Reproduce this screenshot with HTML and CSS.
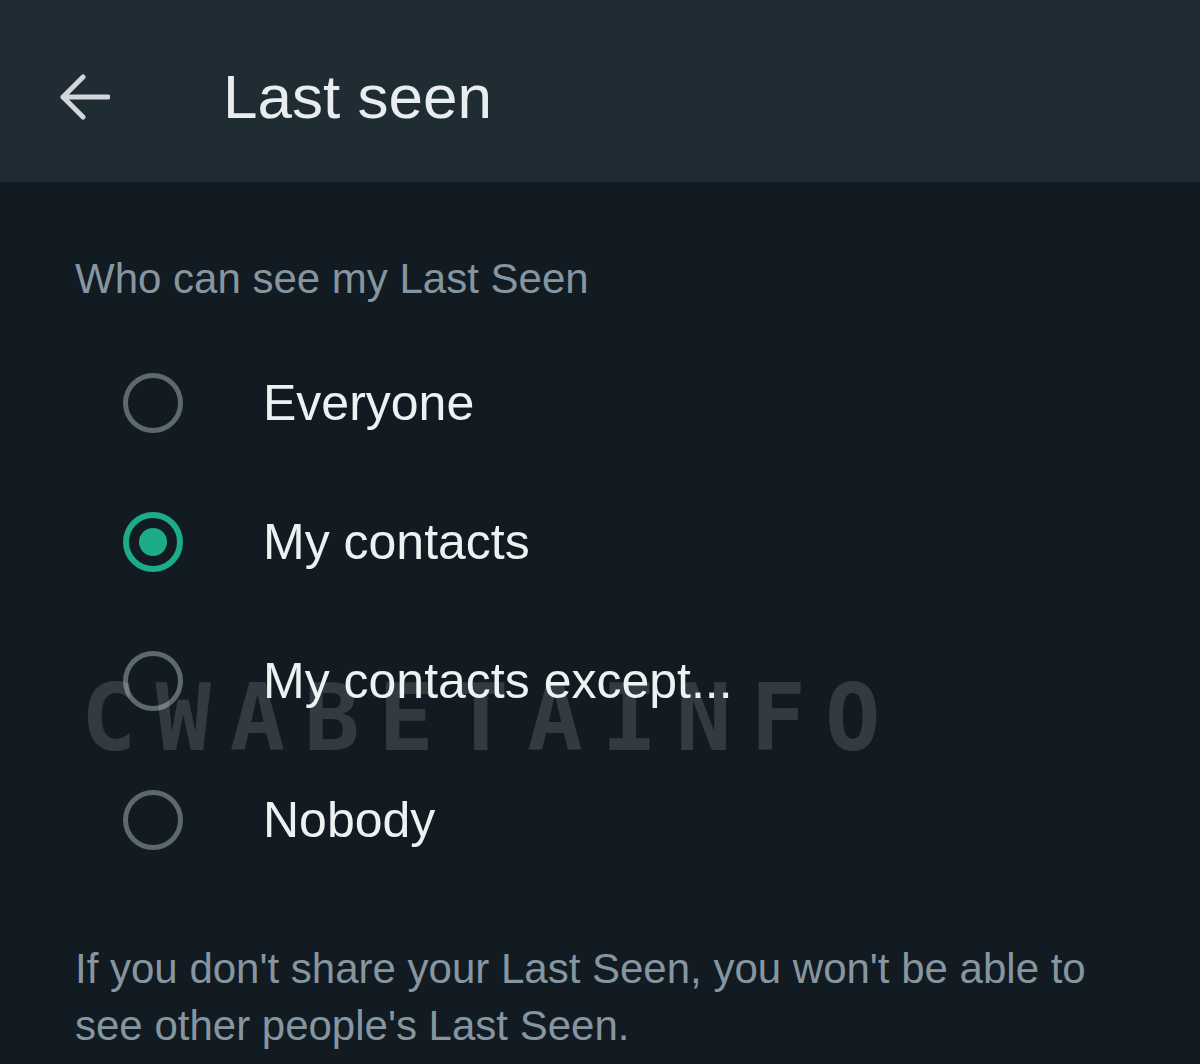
FILE: index.html
```html
<!DOCTYPE html>
<html lang="en">

<head>
    <meta charset="UTF-8">
    <title>Last seen</title>
    <link rel="stylesheet" href="styles.css">
</head>

<body>

    <header class="topbar">
        <svg class="back" width="52" height="46" viewBox="0 0 52 46">
            <path d="M50 23H5M25 3L5 23l20 20" fill="none" stroke="#d1d7db" stroke-width="5" stroke-linecap="round" stroke-linejoin="round" />
        </svg>
        <h1>Last seen</h1>
    </header>

    <main class="content">
        <h2 class="section-label">Who can see my Last Seen</h2>

        <div class="options">
            <div class="watermark">CWABETAINFO</div>
            <label class="option">
                <span class="radio"></span>
                <span class="option-text">Everyone</span>
            </label>
            <label class="option">
                <span class="radio checked"></span>
                <span class="option-text">My contacts</span>
            </label>
            <label class="option">
                <span class="radio"></span>
                <span class="option-text">My contacts except...</span>
            </label>
            <label class="option">
                <span class="radio"></span>
                <span class="option-text">Nobody</span>
            </label>
        </div>

        <p class="note">If you don't share your Last Seen, you won't be able to see other people's Last Seen.</p>
    </main>

</body>

</html>
```

FILE: styles.css
```css
html,
body {
    margin: 0;
    height: 100%;
    font-family: "Liberation Sans", Arial, sans-serif;
}

body {
    background: #121b22;
    color: #e9edef;
    overflow: hidden;
}

.topbar {
    height: 182px;
    box-sizing: border-box;
    padding: 12px 0 0 58px;
    background: #1f2c34;
    display: flex;
    align-items: center;
}

.back {
    flex: none;
}

.topbar h1 {
    margin: 0 0 0 113px;
    font-size: 62px;
    font-weight: normal;
    line-height: 1;
    color: #e9edef;
}

.content {
    padding: 0 75px;
}

.section-label {
    margin: 72px 0 0;
    font-size: 42px;
    line-height: 50px;
    font-weight: normal;
    color: #8696a0;
}

.options {
    position: relative;
    margin-top: 29px;
    padding-left: 48px;
}

.option {
    height: 139px;
    display: flex;
    align-items: center;
}

.radio {
    width: 60px;
    height: 60px;
    box-sizing: border-box;
    border: 5px solid #5d686f;
    border-radius: 50%;
    flex: none;
    display: flex;
    align-items: center;
    justify-content: center;
}

.radio.checked {
    border: 6px solid #1eab87;
}

.radio.checked::after {
    content: "";
    width: 28px;
    height: 28px;
    border-radius: 50%;
    background: #1eab87;
}

.option-text {
    margin-left: 80px;
    font-size: 50px;
    line-height: 1;
    color: #eef1f2;
}

.watermark {
    position: absolute;
    left: 6px;
    top: 340px;
    font-family: "DejaVu Sans Mono", monospace;
    font-weight: bold;
    font-size: 92px;
    line-height: 1;
    letter-spacing: 19px;
    color: rgba(255, 255, 255, 0.14);
    pointer-events: none;
}

.note {
    margin: 51px 0 0;
    font-size: 42px;
    line-height: 57px;
    color: #8696a0;
    max-width: 1030px;
}
```
